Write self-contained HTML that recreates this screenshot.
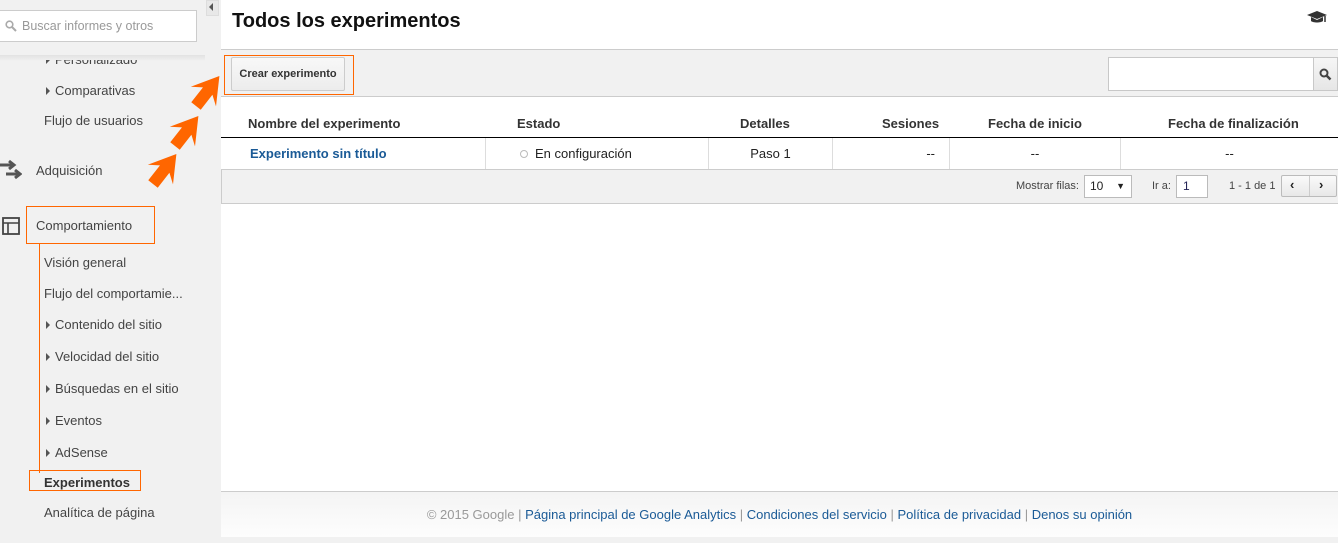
<!DOCTYPE html>
<html><head><meta charset="utf-8">
<style>
*{box-sizing:border-box;margin:0;padding:0}
body{width:1338px;height:543px;overflow:hidden;background:#fff;font-family:"Liberation Sans",Arial,sans-serif;position:relative;color:#333}
.a{position:absolute}
#side{left:0;top:0;width:221px;height:543px;background:#f1f1f1}
.nav{position:absolute;font-size:13px;color:#444;white-space:nowrap}
.tri{display:inline-block;width:0;height:0;border-left:4px solid #555;border-top:4px solid transparent;border-bottom:4px solid transparent;margin-right:5px;vertical-align:0px}
.ob{position:absolute;border:1px solid #ff6600}
.hd{position:absolute;top:116px;font-size:13px;font-weight:bold;color:#333}
.cell{position:absolute;top:138px;height:32px;border-right:1px solid #ddd;font-size:13px;line-height:31px;color:#222}
</style></head><body>
<div id="side" class="a"></div>
<div class="a" style="left:0;top:10px;width:197px;height:32px;background:#fff;border:1px solid #ccc;border-left:none"></div>
<svg class="a" style="left:5px;top:20px" width="12" height="12" viewBox="0 0 12 12"><circle cx="4.5" cy="4.5" r="3.3" fill="none" stroke="#aaa" stroke-width="1.6"/><path d="M7 7l4 4" stroke="#aaa" stroke-width="2"/></svg>
<div class="nav" style="left:22px;top:19px;color:#999;font-size:12.5px">Buscar informes y otros</div>
<div class="a" style="left:0;top:55px;width:205px;height:6px;background:linear-gradient(#e2e2e2,#f1f1f1)"></div>
<div class="a" style="left:206px;top:0;width:13px;height:16px;background:#e8e8e8;border:1px solid #ddd"></div>
<div class="a" style="left:209px;top:3px;width:0;height:0;border-right:4px solid #555;border-top:4px solid transparent;border-bottom:4px solid transparent"></div>
<div class="nav" style="left:46px;top:52px;clip-path:inset(8px 0 0 0)"><span class="tri"></span>Personalizado</div>
<div class="nav" style="left:46px;top:83px"><span class="tri"></span>Comparativas</div>
<div class="nav" style="left:44px;top:113px">Flujo de usuarios</div>
<svg class="a" style="left:0;top:158px" width="22" height="24" viewBox="0 0 22 24"><path d="M0 7h12M9 3l5 4-5 4M6 16h12M15 12l5 4-5 4" fill="none" stroke="#555" stroke-width="3"/></svg>
<div class="nav" style="left:36px;top:163px">Adquisición</div>
<svg class="a" style="left:2px;top:217px" width="18" height="18" viewBox="0 0 18 18"><rect x="1" y="1" width="16" height="16" fill="none" stroke="#444" stroke-width="1.8"/><path d="M1 6h16M6 6v11" stroke="#444" stroke-width="1.6"/></svg>
<div class="nav" style="left:36px;top:218px">Comportamiento</div>
<div class="ob" style="left:26px;top:206px;width:129px;height:38px"></div>
<div class="a" style="left:39px;top:243px;width:1px;height:230px;background:#ff6600"></div>
<div class="nav" style="left:44px;top:255px">Visión general</div>
<div class="nav" style="left:44px;top:286px">Flujo del comportamie...</div>
<div class="nav" style="left:46px;top:317px"><span class="tri"></span>Contenido del sitio</div>
<div class="nav" style="left:46px;top:349px"><span class="tri"></span>Velocidad del sitio</div>
<div class="nav" style="left:46px;top:381px"><span class="tri"></span>Búsquedas en el sitio</div>
<div class="nav" style="left:46px;top:413px"><span class="tri"></span>Eventos</div>
<div class="nav" style="left:46px;top:445px"><span class="tri"></span>AdSense</div>
<div class="nav" style="left:44px;top:475px;font-weight:bold;color:#333">Experimentos</div>
<div class="ob" style="left:29px;top:470px;width:112px;height:21px"></div>
<div class="nav" style="left:44px;top:505px">Analítica de página</div>

<div class="a" style="left:232px;top:10px;font-size:20px;font-weight:bold;color:#111">Todos los experimentos</div>
<svg class="a" style="left:1306px;top:10px" width="22" height="16" viewBox="0 0 22 16"><path d="M1 5L11 1l10 4-10 4z" fill="#333"/><path d="M5 7v4c2 2 10 2 12 0V7l-6 3z" fill="#333"/><path d="M19 6v6" stroke="#333" stroke-width="1.5"/></svg>

<div class="a" style="left:221px;top:49px;width:1117px;height:48px;background:#f1f1f1;border-top:1px solid #ccc;border-bottom:1px solid #ccc"></div>
<div class="a" style="left:231px;top:57px;width:114px;height:34px;background:linear-gradient(#f8f8f8,#ececec);border:1px solid #ccc;border-radius:2px;font-size:11px;font-weight:bold;color:#333;text-align:center;line-height:32px">Crear experimento</div>
<div class="ob" style="left:224px;top:55px;width:130px;height:40px"></div>
<div class="a" style="left:1108px;top:57px;width:206px;height:34px;background:#fff;border:1px solid #c8c8c8"></div>
<div class="a" style="left:1313px;top:57px;width:25px;height:34px;background:linear-gradient(#f6f6f6,#e6e6e6);border:1px solid #c8c8c8"></div>
<svg class="a" style="left:1319px;top:68px" width="13" height="13" viewBox="0 0 13 13"><circle cx="5" cy="5" r="3.5" fill="none" stroke="#444" stroke-width="2"/><path d="M7.5 7.5l4 4" stroke="#444" stroke-width="2.5"/></svg>

<div class="hd" style="left:248px">Nombre del experimento</div>
<div class="hd" style="left:517px">Estado</div>
<div class="hd" style="left:740px">Detalles</div>
<div class="hd" style="left:882px">Sesiones</div>
<div class="hd" style="left:988px">Fecha de inicio</div>
<div class="hd" style="left:1168px">Fecha de finalización</div>
<div class="a" style="left:221px;top:137px;width:1117px;height:1px;background:#000"></div>
<div class="cell" style="left:221px;width:265px;padding-left:29px;color:#1a5a96;font-weight:bold">Experimento sin título</div>
<div class="cell" style="left:486px;width:223px;padding-left:34px"><span style="display:inline-block;width:8px;height:8px;border:1px solid #bbb;border-radius:50%;margin-right:7px"></span>En configuración</div>
<div class="cell" style="left:709px;width:124px;text-align:center">Paso 1</div>
<div class="cell" style="left:833px;width:117px;text-align:right;padding-right:14px">--</div>
<div class="cell" style="left:950px;width:171px;text-align:center">--</div>
<div class="cell" style="left:1121px;width:217px;text-align:center;border-right:none">--</div>
<div class="a" style="left:221px;top:169px;width:1117px;height:35px;background:#f1f1f1;border-top:1px solid #ccc;border-bottom:1px solid #ccc;border-left:1px solid #ccc"></div>
<div class="a" style="left:1016px;top:180px;font-size:11px;color:#444">Mostrar filas:</div>
<div class="a" style="left:1084px;top:175px;width:48px;height:23px;background:#fff;border:1px solid #bbb;font-size:12px;line-height:21px;padding-left:5px;color:#222">10<span style="position:absolute;right:6px;font-size:9px">▼</span></div>
<div class="a" style="left:1152px;top:180px;font-size:11px;color:#444">Ir a:</div>
<div class="a" style="left:1176px;top:175px;width:32px;height:23px;background:#fff;border:1px solid #bbb;font-size:12px;line-height:21px;padding-left:6px;color:#225">1</div>
<div class="a" style="left:1229px;top:180px;font-size:11px;color:#444">1 - 1 de 1</div>
<div class="a" style="left:1281px;top:175px;width:56px;height:22px;background:linear-gradient(#fafafa,#e8e8e8);border:1px solid #bbb;border-radius:2px"></div>
<div class="a" style="left:1309px;top:176px;width:1px;height:20px;background:#ccc"></div>
<div class="a" style="left:1290px;top:177px;font-size:13px;font-weight:bold;color:#222">‹</div>
<div class="a" style="left:1319px;top:177px;font-size:13px;font-weight:bold;color:#222">›</div>

<div class="a" style="left:221px;top:491px;width:1117px;height:46px;border-top:1px solid #ccc;background:linear-gradient(#f4f4f4,#fdfdfd)"></div>
<div class="a" style="left:221px;top:537px;width:1117px;height:6px;background:#f1f1f1"></div>
<div class="a" style="left:221px;top:507px;width:1117px;text-align:center;font-size:13px;color:#999">© 2015 Google | <span style="color:#1a5a96">Página principal de Google Analytics</span> | <span style="color:#1a5a96">Condiciones del servicio</span> | <span style="color:#1a5a96">Política de privacidad</span> | <span style="color:#1a5a96">Denos su opinión</span></div>

<svg class="a" style="left:0;top:0" width="240" height="200">
<defs><polygon id="ar" points="0,-6 19,-6 12,-16 38,0 12,16 19,6 0,6" fill="#ff6600"/></defs>
<use href="#ar" transform="translate(153,184) rotate(-52)"/>
<use href="#ar" transform="translate(175,146) rotate(-52)"/>
<use href="#ar" transform="translate(196,106) rotate(-52)"/>
</svg>
</body></html>
